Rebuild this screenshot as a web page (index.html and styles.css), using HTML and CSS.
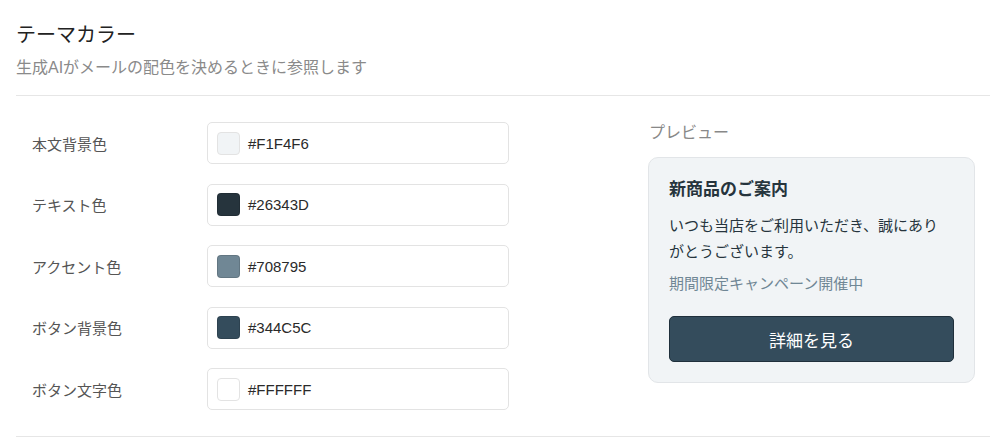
FILE: index.html
```html
<!DOCTYPE html>
<html lang="ja">
<head>
<meta charset="utf-8">
<link rel="stylesheet" href="styles.css">
</head>
<body>
<div class="page">
  <header class="head">
    <h1 class="title">テーマカラー</h1>
    <p class="subtitle">生成AIがメールの配色を決めるときに参照します</p>
  </header>
  <section class="body">
    <div class="fields">
      <div class="row">
        <span class="label">本文背景色</span>
        <div class="input"><span class="swatch light" style="background:#F1F4F6"></span><span class="hex">#F1F4F6</span></div>
      </div>
      <div class="row">
        <span class="label">テキスト色</span>
        <div class="input"><span class="swatch" style="background:#26343D"></span><span class="hex">#26343D</span></div>
      </div>
      <div class="row">
        <span class="label">アクセント色</span>
        <div class="input"><span class="swatch" style="background:#708795"></span><span class="hex">#708795</span></div>
      </div>
      <div class="row">
        <span class="label">ボタン背景色</span>
        <div class="input"><span class="swatch" style="background:#344C5C"></span><span class="hex">#344C5C</span></div>
      </div>
      <div class="row">
        <span class="label">ボタン文字色</span>
        <div class="input"><span class="swatch light" style="background:#FFFFFF"></span><span class="hex">#FFFFFF</span></div>
      </div>
    </div>
    <aside class="preview">
      <div class="preview-label">プレビュー</div>
      <div class="card">
        <div class="card-title">新商品のご案内</div>
        <p class="card-text">いつも当店をご利用いただき、誠にありがとうございます。</p>
        <p class="card-accent">期間限定キャンペーン開催中</p>
        <div class="card-button">詳細を見る</div>
      </div>
    </aside>
  </section>
</div>
</body>
</html>
```

FILE: styles.css
```css
* { box-sizing: border-box; }
html, body { margin: 0; padding: 0; background: #fff; }
body {
  font-family: "Liberation Sans", "Noto Sans CJK JP", sans-serif;
  color: #333;
}
.page {
  width: 974px;
  margin-left: 16px;
}
.head {
  padding-top: 20px;
  padding-bottom: 16px;
  border-bottom: 1px solid #e6e6e6;
}
.title {
  margin: 0;
  font-size: 20px;
  line-height: 30px;
  font-weight: 400;
  color: #222;
}
.subtitle {
  margin: 7px 0 0;
  font-size: 16px;
  line-height: 22px;
  color: #8a8a8a;
}
.body {
  display: flex;
  padding: 26px 0 26px;
  border-bottom: 1px solid #e6e6e6;
}
.fields {
  width: 632px;
  display: flex;
  flex-direction: column;
  gap: 19.5px;
  padding-left: 16px;
}
.row {
  display: flex;
  align-items: center;
  height: 42px;
}
.label {
  width: 175px;
  font-size: 15px;
  color: #555;
}
.input {
  width: 302px;
  height: 42px;
  border: 1px solid #e3e3e3;
  border-radius: 5px;
  display: flex;
  align-items: center;
  gap: 8px;
  padding-left: 9px;
}
.swatch {
  width: 23px;
  height: 23px;
  border-radius: 4px;
  border: 1px solid rgba(0,0,0,0.12);
}
.swatch.light { border-color: #e3e3e3; }
.hex {
  font-size: 15px;
  color: #2a2a2a;
}
.preview {
  width: 327px;
}
.preview-label {
  font-size: 16px;
  line-height: 22px;
  color: #888;
  padding-left: 1px;
}
.card {
  margin-top: 13px;
  background: #F1F4F6;
  border: 1px solid #e2e5e8;
  border-radius: 10px;
  padding: 21px 20px 20px;
  color: #26343D;
}
.card-title {
  font-size: 17px;
  line-height: 22px;
  font-weight: 700;
}
.card-text {
  margin: 12px 0 0;
  padding-right: 12px;
  font-size: 15px;
  line-height: 26px;
}
.card-accent {
  margin: 8px 0 0;
  font-size: 15px;
  line-height: 22px;
  color: #708795;
}
.card-button {
  margin-top: 21px;
  height: 46px;
  background: #344C5C;
  border: 1px solid #1f2f3b;
  border-radius: 5px;
  color: #fff;
  font-size: 17px;
  display: flex;
  align-items: center;
  justify-content: center;
}
```
